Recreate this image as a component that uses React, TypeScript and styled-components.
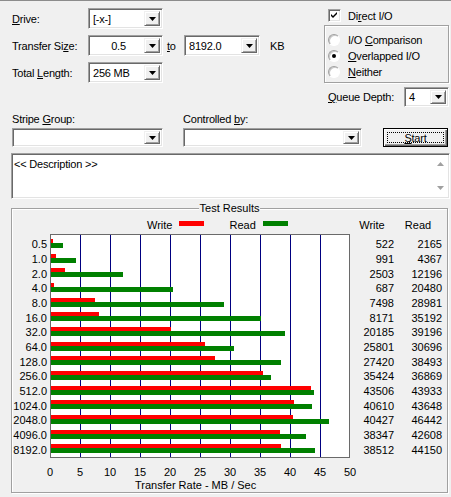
import React from 'react'
import styled, { createGlobalStyle } from 'styled-components'

const GlobalStyle = createGlobalStyle`
  html, body {
    margin: 0;
    padding: 0;
    background: #f0f0f0;
  }
  body {
    font-family: "Liberation Sans", Arial, sans-serif;
    font-size: 11px;
    color: #000;
  }
`

const results: [string, number, number][] = [
  ['0.5', 522, 2165],
  ['1.0', 991, 4367],
  ['2.0', 2503, 12196],
  ['4.0', 687, 20480],
  ['8.0', 7498, 28981],
  ['16.0', 8171, 35192],
  ['32.0', 20185, 39196],
  ['64.0', 25801, 30696],
  ['128.0', 27420, 38493],
  ['256.0', 35424, 36869],
  ['512.0', 43506, 43933],
  ['1024.0', 40610, 43648],
  ['2048.0', 40427, 46442],
  ['4096.0', 38347, 42608],
  ['8192.0', 38512, 44150],
]

const ticks = [0, 5, 10, 15, 20, 25, 30, 35, 40, 45, 50]

export const Window = styled.div`
  width: 451px;
  height: 497px;
  box-sizing: border-box;
  border-top: 1px solid #8c8c8c;
  background: #f0f0f0;
  overflow: hidden;
  letter-spacing: -0.2px;
`

export const TopSection = styled.div`
  display: flex;
  padding-top: 7px;
`
export const LeftColumn = styled.div`
  width: 324px;
  box-sizing: border-box;
  padding-left: 12px;
  display: flex;
  flex-direction: column;
  gap: 6px;
`
export const RightColumn = styled.div`
  width: 125px;
  display: flex;
  flex-direction: column;
`
export const FormRow = styled.div`
  display: flex;
  align-items: center;
  height: 21px;
`
export const Label = styled.span<{ $w?: number }>`
  width: ${p => (p.$w ? `${p.$w}px` : 'auto')};
  flex: none;
  white-space: nowrap;
`
export const ToLabel = styled.span`
  width: 21px;
  padding-left: 4px;
  box-sizing: border-box;
`
export const UnitLabel = styled.span`
  margin-left: 10px;
`

export const SelectBox = styled.div<{ $w: number; $h?: number }>`
  width: ${p => p.$w}px;
  height: ${p => p.$h ?? 21}px;
  box-sizing: border-box;
  flex: none;
  background: #fff;
  border: 1px solid;
  border-color: #a0a0a0 #fff #fff #a0a0a0;
  box-shadow: inset 1px 1px #696969, inset -1px -1px #e3e3e3;
  padding: 2px;
  display: flex;
`
export const SelectValue = styled.span<{ $center?: boolean }>`
  flex: 1;
  display: flex;
  align-items: center;
  justify-content: ${p => (p.$center ? 'center' : 'flex-start')};
  padding-left: 2px;
  white-space: nowrap;
`
export const ArrowButton = styled.span`
  width: 16px;
  flex: none;
  box-sizing: border-box;
  background: #f0f0f0;
  border: 1px solid;
  border-color: #f0f0f0 #696969 #696969 #f0f0f0;
  box-shadow: inset 1px 1px #fff, inset -1px -1px #a0a0a0;
  display: flex;
  align-items: center;
  justify-content: center;
`

export const CheckRow = styled.div`
  display: flex;
  align-items: center;
  height: 13px;
  margin-top: 1px;
  padding-left: 4px;
  gap: 7px;
`
export const CheckBox = styled.span`
  width: 13px;
  height: 13px;
  box-sizing: border-box;
  background: #fff;
  border: 1px solid;
  border-color: #a0a0a0 #fff #fff #a0a0a0;
  box-shadow: inset 1px 1px #696969, inset -1px -1px #e3e3e3;
  display: flex;
  align-items: center;
  justify-content: center;
`
export const OptionGroup = styled.div`
  margin-top: 3px;
  height: 58px;
  box-sizing: border-box;
  border: 1px solid #a0a0a0;
  box-shadow: inset 1px 1px #fff, 1px 1px #fff;
  padding: 6px 0 0 3px;
`
export const RadioRow = styled.div`
  display: flex;
  align-items: center;
  height: 16px;
  gap: 8px;
`
export const Radio = styled.span<{ $checked?: boolean }>`
  width: 12px;
  height: 12px;
  box-sizing: border-box;
  border-radius: 50%;
  background: #fff;
  border: 1px solid;
  border-color: #a0a0a0 #fff #fff #a0a0a0;
  box-shadow: inset 1px 1px #c8c8c8;
  display: flex;
  align-items: center;
  justify-content: center;
  &::after {
    content: '';
    width: 4px;
    height: 4px;
    border-radius: 50%;
    background: ${p => (p.$checked ? '#000' : 'transparent')};
  }
`
export const QueueRow = styled.div`
  margin-top: 4px;
  display: flex;
  align-items: center;
  justify-content: space-between;
  padding-left: 4px;
`

export const MiddleSection = styled.div`
  display: grid;
  grid-template-columns: 151px 179px 65px;
  grid-template-rows: 14px 19px;
  column-gap: 20px;
  row-gap: 2px;
  padding-left: 12px;
  margin-top: 5px;
  align-items: center;
`
export const StartButton = styled.button`
  grid-column: 3;
  grid-row: 2;
  align-self: start;
  width: 65px;
  height: 19px;
  margin-left: 1px;
  box-sizing: border-box;
  border: 1px solid #000;
  background: #f0f0f0;
  box-shadow: inset 1px 1px #fff, inset -1px -1px #696969, inset -2px -2px #a0a0a0;
  padding: 3px;
  display: flex;
  font: inherit;
  letter-spacing: inherit;
  color: #000;
`
export const FocusRing = styled.span`
  flex: 1;
  border: 1px dotted #000;
  display: flex;
  align-items: center;
  justify-content: center;
`

export const Description = styled.div`
  margin: 6px 0 0 11px;
  width: 439px;
  height: 46px;
  box-sizing: border-box;
  background: #fff;
  border: 1px solid;
  border-color: #a0a0a0 #fff #fff #a0a0a0;
  box-shadow: inset 1px 1px #696969, inset -1px -1px #e3e3e3;
  display: flex;
`
export const DescriptionText = styled.div`
  flex: 1;
  padding: 4px 0 0 2px;
`
export const ScrollTrack = styled.div`
  width: 17px;
  display: flex;
  flex-direction: column;
  justify-content: space-between;
  align-items: center;
  padding: 8px 0 8px;
`

export const ResultsGroup = styled.div`
  position: relative;
  margin: 9px 0 0 11px;
  width: 437px;
  height: 285px;
  box-sizing: border-box;
  border: 1px solid #a0a0a0;
  box-shadow: inset 1px 1px #fff, 1px 1px #fff;
  letter-spacing: 0;
`
export const GroupTitle = styled.span`
  position: absolute;
  top: -8px;
  left: 50%;
  transform: translateX(-50%);
  background: #f0f0f0;
  padding: 0 1px;
  line-height: 14px;
  white-space: nowrap;
`
export const ChartGrid = styled.div`
  display: grid;
  grid-template-columns: 38px 300px 44px 48px;
  grid-template-rows: 18px 224px;
  padding-top: 7px;
`
export const Legend = styled.div`
  grid-column: 2;
  display: flex;
  align-items: center;
  padding-left: 97px;
`
export const LegendSwatch = styled.span<{ $color: string }>`
  width: 25px;
  height: 5px;
  margin: 0 25px 3px 7px;
  background: ${p => p.$color};
`
export const ColumnHead = styled.div`
  display: flex;
  align-items: center;
  justify-content: center;
`
export const RowList = styled.div<{ $align?: string }>`
  display: grid;
  grid-template-rows: repeat(15, 1fr);
  padding: 3px 0 1px;
  box-sizing: border-box;
  text-align: ${p => p.$align ?? 'right'};
`
export const RowLabel = styled.div`
  display: flex;
  align-items: center;
  justify-content: flex-end;
  padding-right: 3px;
`
export const RowValue = styled.div`
  display: flex;
  align-items: center;
  justify-content: flex-end;
`
export const Plot = styled.div`
  box-sizing: border-box;
  border: 1px solid #6a6a6a;
  background-color: #fff;
  background-image: linear-gradient(to right, #000080 1px, transparent 1px);
  background-size: 30px 100%;
  background-position: 29px 0;
  display: grid;
  grid-template-rows: repeat(15, 1fr);
  padding-top: 2px;
`
export const BarRow = styled.div`
  display: flex;
  flex-direction: column;
  padding-top: 2px;
`
export const Bar = styled.div<{ $color: string; $h: number }>`
  height: ${p => p.$h}px;
  background: ${p => p.$color};
`
export const AxisRow = styled.div`
  display: grid;
  grid-template-columns: repeat(11, 30px);
  padding: 7px 0 0 23px;
  line-height: 14px;
  text-align: center;
`
export const AxisTitle = styled.div`
  padding-left: 123px;
  line-height: 13px;
`

const Arrow = ({ color = '#000' }: { color?: string }) => (
  <svg width="7" height="4" viewBox="0 0 7 4">
    <polygon points="0,0 7,0 3.5,4" fill={color} />
  </svg>
)

const Select = ({ w, h, value, center }: { w: number; h?: number; value?: string; center?: boolean }) => (
  <SelectBox $w={w} $h={h}>
    <SelectValue $center={center}>{value}</SelectValue>
    <ArrowButton>
      <Arrow />
    </ArrowButton>
  </SelectBox>
)

const rate = (v: number) => Math.max(1, v * 0.006 - 1)

export default function App() {
  return (
    <Window>
      <GlobalStyle />
      <TopSection>
        <LeftColumn>
          <FormRow>
            <Label $w={76}><u>D</u>rive:</Label>
            <Select w={75} value="[-x-]" />
          </FormRow>
          <FormRow>
            <Label $w={76}>Transfer Si<u>z</u>e:</Label>
            <Select w={75} value="0.5" center />
            <ToLabel><u>t</u>o</ToLabel>
            <Select w={76} value="8192.0" />
            <UnitLabel>KB</UnitLabel>
          </FormRow>
          <FormRow>
            <Label $w={76}>Total <u>L</u>ength:</Label>
            <Select w={75} value="256 MB" />
          </FormRow>
        </LeftColumn>
        <RightColumn>
          <CheckRow>
            <CheckBox>
              <svg width="7" height="7" viewBox="0 0 7 7">
                <path d="M0 2 L2 4 L6 0 L6 2 L2 6 L0 4 Z" fill="#000" />
              </svg>
            </CheckBox>
            <span>Di<u>r</u>ect I/O</span>
          </CheckRow>
          <OptionGroup>
            <RadioRow>
              <Radio />
              <span>I/O <u>C</u>omparison</span>
            </RadioRow>
            <RadioRow>
              <Radio $checked />
              <span><u>O</u>verlapped I/O</span>
            </RadioRow>
            <RadioRow>
              <Radio />
              <span><u>N</u>either</span>
            </RadioRow>
          </OptionGroup>
          <QueueRow>
            <Label><u>Q</u>ueue Depth:</Label>
            <Select w={45} h={20} value="4" />
          </QueueRow>
        </RightColumn>
      </TopSection>

      <MiddleSection>
        <Label>Stripe <u>G</u>roup:</Label>
        <Label>Controlled <u>b</u>y:</Label>
        <span />
        <Select w={151} h={19} />
        <Select w={179} h={19} />
        <StartButton>
          <FocusRing><u>S</u>tart</FocusRing>
        </StartButton>
      </MiddleSection>

      <Description>
        <DescriptionText>&lt;&lt; Description &gt;&gt;</DescriptionText>
        <ScrollTrack>
          <svg width="7" height="4" viewBox="0 0 7 4">
            <polygon points="0,4 7,4 3.5,0" fill="#a0a0a0" />
          </svg>
          <Arrow color="#a0a0a0" />
        </ScrollTrack>
      </Description>

      <ResultsGroup>
        <GroupTitle>Test Results</GroupTitle>
        <ChartGrid>
          <span />
          <Legend>
            Write<LegendSwatch $color="#ff0000" />
            Read<LegendSwatch $color="#008000" />
          </Legend>
          <ColumnHead>Write</ColumnHead>
          <ColumnHead>Read</ColumnHead>

          <RowList>
            {results.map(([size]) => (
              <RowLabel key={size}>{size}</RowLabel>
            ))}
          </RowList>
          <Plot>
            {results.map(([size, w, r]) => (
              <BarRow key={size}>
                <Bar $color="#ff0000" $h={4} style={{ width: rate(w) }} />
                <Bar $color="#008000" $h={5} style={{ width: rate(r) }} />
              </BarRow>
            ))}
          </Plot>
          <RowList>
            {results.map(([size, w]) => (
              <RowValue key={size}>{w}</RowValue>
            ))}
          </RowList>
          <RowList>
            {results.map(([size, , r]) => (
              <RowValue key={size}>{r}</RowValue>
            ))}
          </RowList>
        </ChartGrid>
        <AxisRow>
          {ticks.map(t => (
            <span key={t}>{t}</span>
          ))}
        </AxisRow>
        <AxisTitle>Transfer Rate - MB / Sec</AxisTitle>
      </ResultsGroup>
    </Window>
  )
}
